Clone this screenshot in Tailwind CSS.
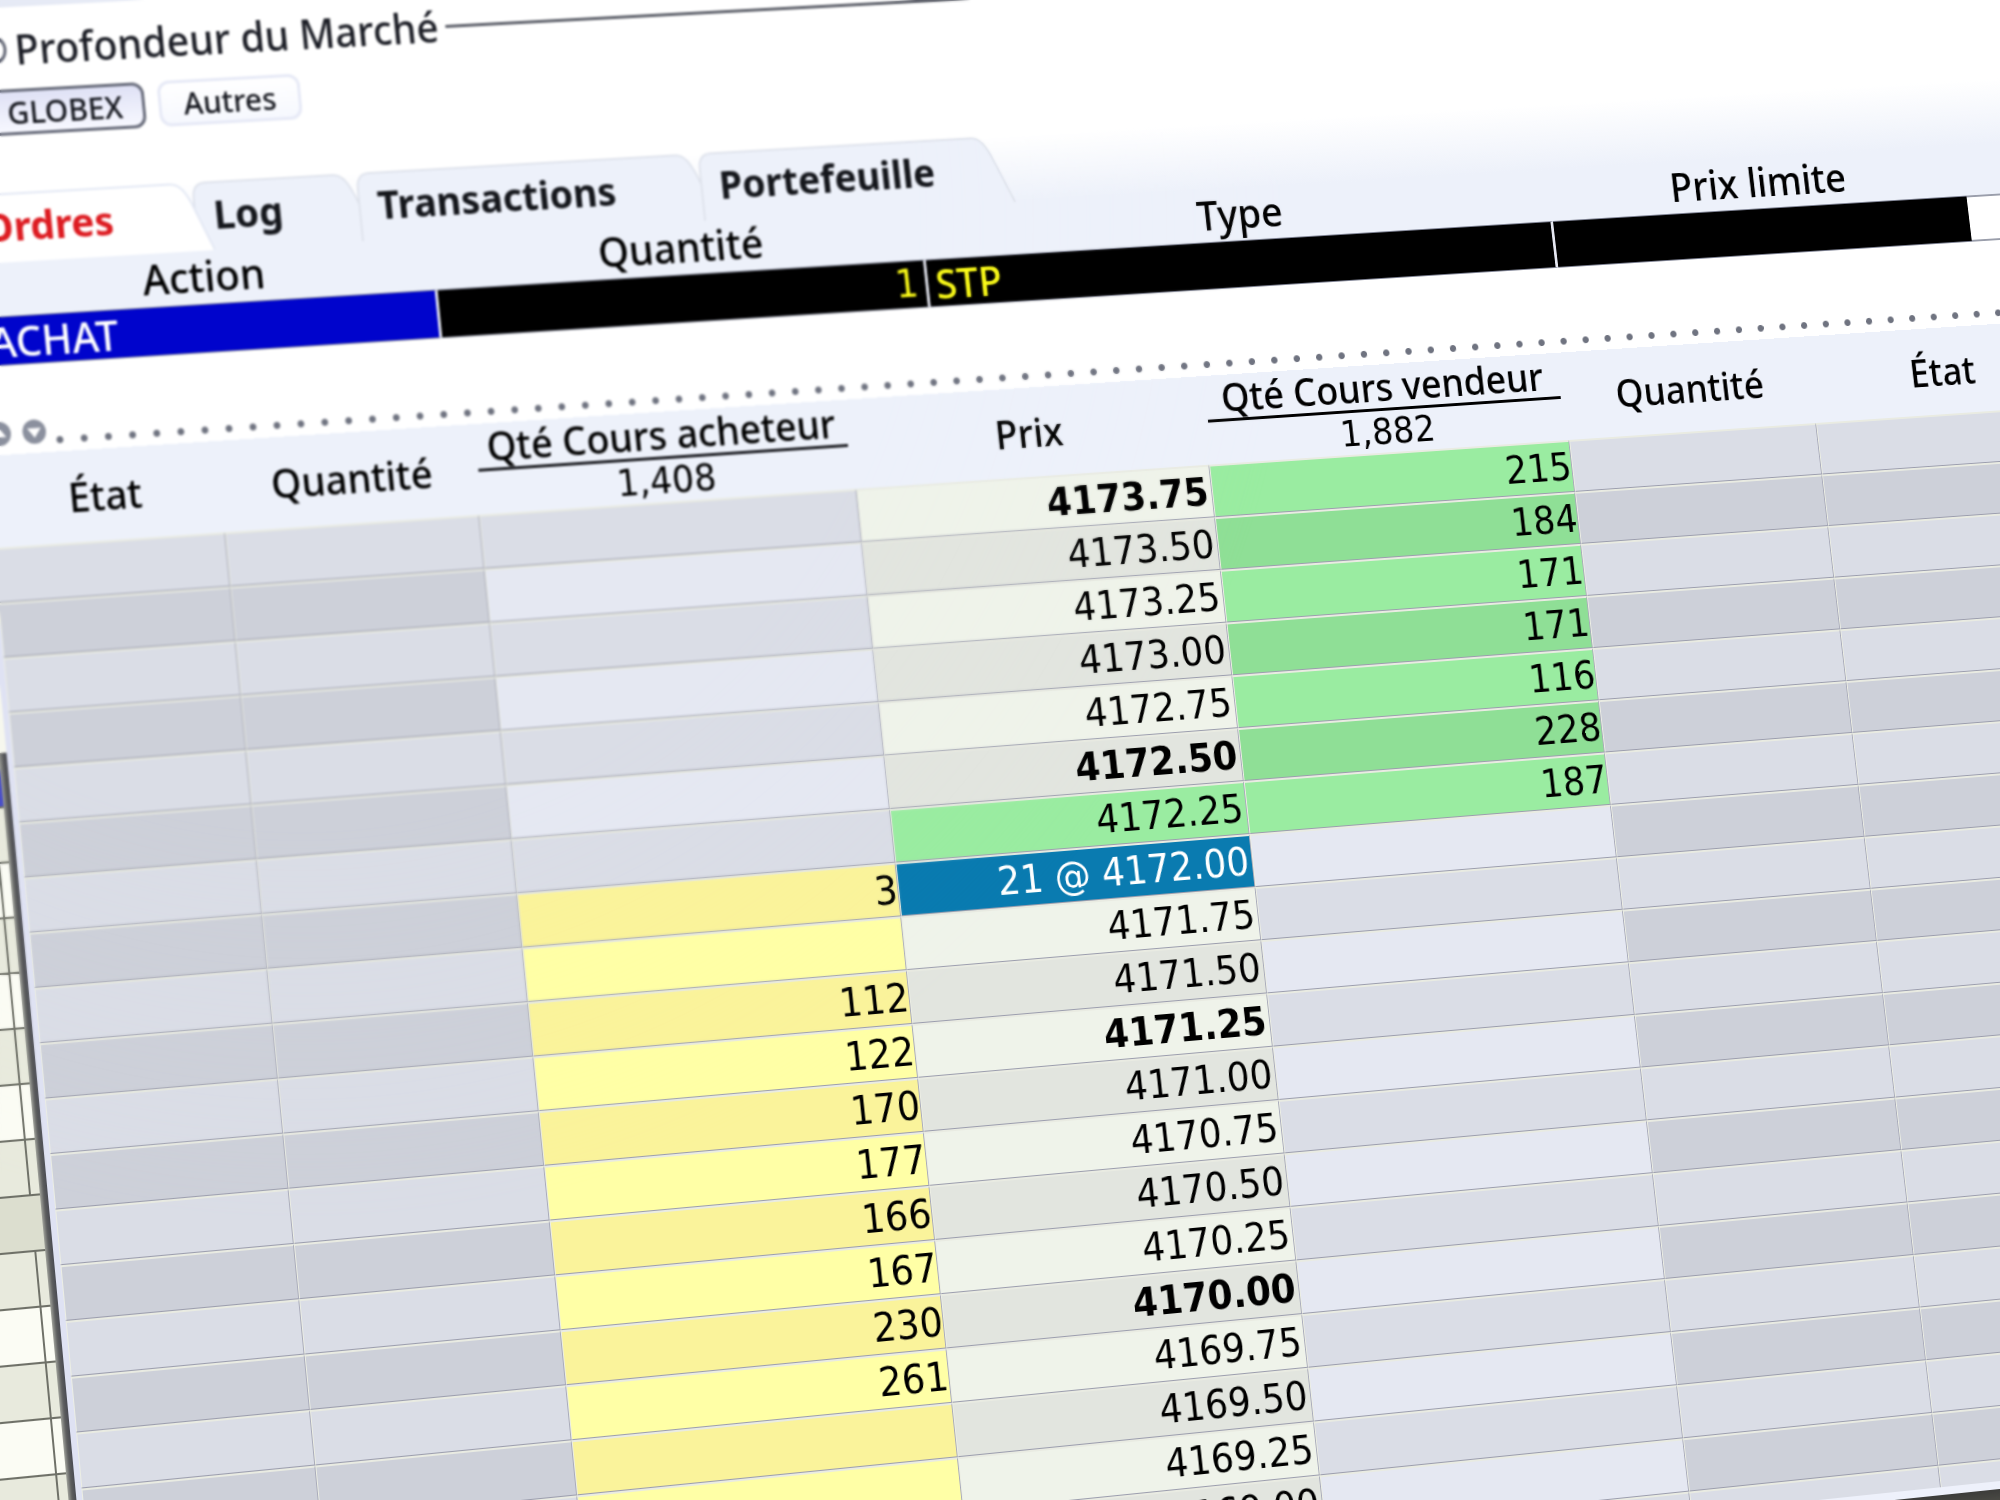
<!DOCTYPE html>
<html lang="fr">
<head>
<meta charset="utf-8">
<title>Profondeur du Marché</title>
<script src="https://cdn.jsdelivr.net/npm/@tailwindcss/browser@4"></script>
</head>
<body class="relative h-screen overflow-hidden bg-white font-['Noto_Sans',sans-serif] text-[40px] font-medium text-black">

<!-- The trading desk lies on a plane seen in perspective -->
<main class="flex w-[119%] origin-top-left [transform:matrix3d(0.972131,-0.050085,0,0.000030492,0.094496,1.000264,0,-0.0000129244,0,0,1,0,-161.63,-49.44,0,1)]">

  <!-- Window behind, only its last columns show -->
  <aside class="flex w-[95px] shrink-0 bg-[#f6f7ee] pt-[801px]" aria-hidden="true">
    <div class="flex-1" id="behind"></div>
    <div class="w-2 bg-linear-to-r from-[#a0a29b] via-[#5c5d5e] to-[#4a4b52]"></div>
  </aside>

  <div class="flex min-w-0 flex-1 flex-col">
    <section class="flex flex-col border-b-8 border-l-6 border-b-[#eef1fb] border-l-[#dfe2f3] bg-white">
      <div class="h-[65px] bg-[#e6eaf5]"></div>

      <!-- Group title -->
      <div class="mt-[14px] flex h-14 items-center gap-2 pl-[30px] text-[#1c1e26]">
        <svg class="size-8 shrink-0" viewBox="0 0 32 32" fill="none" stroke="#5f6372" stroke-width="3"><circle cx="16" cy="16" r="14"/></svg>
        <h1 class="text-[41px] leading-14 whitespace-nowrap">Profondeur du Marché</h1>
        <div class="h-[3px] flex-1 bg-[#5b5e68]"></div>
      </div>

      <div class="mt-3 flex h-[46px] gap-[14px] pl-[33px] text-[31px] text-[#16181f]">
        <button class="w-[166px] rounded-xl border-3 border-[#666a79] bg-linear-to-b from-[#dfe1f5] to-[#f7f8ff] leading-9">GLOBEX</button>
        <button class="w-[149px] rounded-xl border-3 border-[#e6e9f6] bg-linear-to-b from-white to-[#f6f8fe] leading-9">Autres</button>
      </div>

      <!-- Tabs -->
      <nav class="mt-[57px] flex h-[69px] bg-linear-to-b from-white to-[#edf1fa] font-bold" role="tablist">
        <button role="tab" aria-selected="true" class="relative z-10 flex w-[239px] pt-[5px] pl-5 leading-14 text-[#dd1c22]">
          <svg class="absolute top-0 left-0" width="257" height="69" viewBox="0 0 257 69" fill="none"><path d="M0 1H216C227 1 232 10 237 20L257 69H0Z" fill="#fff"/><path d="M0 1H216C227 1 232 10 237 20L257 69" stroke="#e3e8f4" stroke-width="2"/></svg>
          <span class="relative">Ordres</span>
        </button>
        <button role="tab" class="relative flex w-[172px] pt-[5px] pl-5 leading-14 text-[#15171c]">
          <svg class="absolute top-0 left-0" width="190" height="69" viewBox="0 0 190 69" fill="#edf1fa" stroke="#dfe3ec" stroke-width="2"><path d="M1 69V16Q1 1 14 1H148C158 1 163 10 168 20L189 69"/></svg>
          <span class="relative">Log</span>
        </button>
        <button role="tab" class="relative flex w-[364px] pt-[5px] pl-5 leading-14 text-[#15171c]">
          <svg class="absolute top-0 left-0" width="382" height="69" viewBox="0 0 382 69" fill="#edf1fa" stroke="#dfe3ec" stroke-width="2"><path d="M1 69V16Q1 1 14 1H340C350 1 355 10 360 20L381 69"/></svg>
          <span class="relative">Transactions</span>
        </button>
        <button role="tab" class="relative flex w-[338px] pt-[5px] pl-5 leading-14 text-[#15171c]">
          <svg class="absolute top-0 left-0" width="339" height="69" viewBox="0 0 339 69" fill="#edf1fa" stroke="#dfe3ec" stroke-width="2"><path d="M1 69V16Q1 1 14 1H297C307 1 312 10 317 20L338 69"/></svg>
          <span class="relative">Portefeuille</span>
        </button>
      </nav>

      <!-- Order entry -->
      <form class="grid grid-cols-[485px_524px_698px_476px_1fr] bg-[#edf1fa] text-center text-[42px]">
        <div class="flex flex-col">
          <label for="action" class="h-[53px] leading-[50px]">Action</label>
          <input id="action" value="ACHAT" class="h-[49px] w-full border-y border-r-3 border-y-[#7f8394] border-r-[#e6e8f2] bg-[#0004cc] px-4 text-white">
        </div>
        <div class="flex flex-col">
          <label for="qty" class="h-[53px] leading-[50px]">Quantité</label>
          <input id="qty" value="1" class="h-[49px] w-full border-y border-r-3 border-y-[#7f8394] border-r-[#e6e8f2] bg-black px-2 text-right font-['DejaVu_Sans',sans-serif] text-[39px] text-[#ffff19]">
        </div>
        <div class="flex flex-col">
          <label for="type" class="h-[53px] leading-[50px]">Type</label>
          <select id="type" class="h-[49px] w-full appearance-none border-y border-r-3 border-y-[#7f8394] border-r-[#e6e8f2] bg-black px-2 leading-[46px] text-[#ffff19]"><option>STP</option></select>
        </div>
        <div class="flex flex-col">
          <label for="limit" class="h-[53px] leading-[50px]">Prix limite</label>
          <input id="limit" class="h-[49px] w-full border-y border-[#7f8394] bg-black px-2 text-[#ffff19]">
        </div>
        <div class="flex flex-col pt-[53px]">
          <input aria-label="Prix stop" class="h-[49px] w-full border-y-2 border-[#9a9eab] bg-white px-2">
        </div>
      </form>

      <!-- Split handle -->
      <div class="mt-[55px] flex h-[33px] pl-[5px]">
        <svg class="mr-3 size-6 shrink-0" viewBox="0 0 24 24"><circle cx="12" cy="12" r="12" fill="#8b909e"/><path d="M5 15.500h14L12 6Z" fill="#fff"/></svg>
        <svg class="mr-px size-6 shrink-0" viewBox="0 0 24 24"><circle cx="12" cy="12" r="12" fill="#8b909e"/><path d="M5 8.500h14L12 18Z" fill="#fff"/></svg>
        <div class="mb-[7px] h-[9px] flex-1 self-end bg-[radial-gradient(circle,#6f7380_3px,transparent_4px)] bg-size-[25px_9px]"></div>
      </div>

      <!-- Market depth -->
      <div class="max-h-[1193px] overflow-hidden">
        <table class="w-full table-fixed border-separate border-spacing-0">
          <colgroup>
            <col class="w-[239px]"><col class="w-[266px]"><col class="w-[403px]"><col class="w-[386px]"><col class="w-[403px]"><col class="w-[282px]"><col>
          </colgroup>
          <thead class="bg-[#edf1fa]">
            <tr class="h-[91px] leading-[45px]">
              <th scope="col" class="p-0 font-medium">État</th>
              <th scope="col" class="p-0 pl-2 font-medium">Quantité</th>
              <th scope="col" class="p-0 px-1 align-top font-medium"><div class="h-12 border-b-3 border-[#1a1b20] whitespace-nowrap">Qté Cours acheteur</div><div class="h-[43px] font-['DejaVu_Sans',sans-serif] text-[37px] leading-[43px]">1,408</div></th>
              <th scope="col" class="p-0 font-medium">Prix</th>
              <th scope="col" class="p-0 px-1 align-top font-medium"><div class="h-12 border-b-3 border-black whitespace-nowrap">Qté Cours vendeur</div><div class="h-[43px] font-['DejaVu_Sans',sans-serif] text-[37px] leading-[43px]">1,882</div></th>
              <th scope="col" class="p-0 pl-1 font-medium">Quantité</th>
              <th scope="col" class="p-0 pl-1 font-medium">État</th>
            </tr>
          </thead>
          <tbody id="depth" class="text-right font-['DejaVu_Sans',sans-serif] text-[39px] leading-[51px]"></tbody>
        </table>
      </div>
    </section>
    <div class="h-[60px] bg-linear-to-b from-[#3c3c3a] to-[#8a8872]"></div>
  </div>
</main>

<!-- Depth of field: the upper left corner is out of focus -->
<div class="pointer-events-none absolute inset-0 backdrop-blur-[1px] [mask-image:radial-gradient(ellipse_1000px_1000px_at_15%_15%,black_60%,transparent_100%)]" aria-hidden="true"></div>

<script>
  // [bid size, price, ask size]
  const levels = [
    ['', '4173.75', '215'], ['', '4173.50', '184'], ['', '4173.25', '171'], ['', '4173.00', '171'],
    ['', '4172.75', '116'], ['', '4172.50', '228'], ['', '4172.25', '187'], ['3', '21 @ 4172.00', ''],
    ['', '4171.75', ''], ['112', '4171.50', ''], ['122', '4171.25', ''], ['170', '4171.00', ''],
    ['177', '4170.75', ''], ['166', '4170.50', ''], ['167', '4170.25', ''], ['230', '4170.00', ''],
    ['261', '4169.75', ''], ['', '4169.50', ''], ['', '4169.25', ''], ['', '4169.00', ''], ['', '4168.75', '']
  ];
  const tone = {
    side: ['bg-[#dadde6]', 'bg-[#cdd0d9]'],
    book: ['bg-[#dadde6]', 'bg-[#e5e8f2]'],
    bid: ['bg-[#ffffa6]', 'bg-[#faf39b]'],
    ask: ['bg-[#9aeca1]', 'bg-[#8fdf96]'],
    price: ['bg-[#eff3ea]', 'bg-[#e2e5df]']
  };
  const cell = (text, style) =>
    `<td class="h-[54px] border-t-2 border-r border-b border-l border-t-[#e9ebe2] border-r-[#a9abba] border-b-[#9c9eae] border-l-[#eceee4] p-0 whitespace-nowrap ${style}">${text}</td>`;
  document.getElementById('depth').innerHTML = levels.map(([bid, price, ask], i) => {
    const p = i % 2;
    const priceStyle = i === 7 ? 'bg-[#0a7bb0] pr-[3px] text-white'
      : i === 6 ? 'pr-[3px] ' + tone.ask[0]
      : i % 5 === 0 ? 'pr-[3px] font-bold ' + tone.price[p] : 'pr-[3px] ' + tone.price[p];
    return '<tr>' + cell('', tone.side[p]) + cell('', tone.side[p])
      + cell(bid, i > 6 ? tone.bid[p] : tone.book[p])
      + cell(price, priceStyle)
      + cell(ask, i < 7 ? tone.ask[p] : tone.book[p])
      + cell('', tone.side[p]) + cell('', tone.side[p]) + '</tr>';
  }).join('');

  const strip = (style, split) =>
    `<div class="flex h-[54px] border-b-2 border-[#6f7168] ${style}"><div class="${split ? 'w-[78px] border-r-2 border-[#6f7168]' : 'w-[78px]'}"></div></div>`;
  document.getElementById('behind').innerHTML = Array.from({ length: 18 }, (_, i) =>
    i === 0 ? strip('bg-[#4a4fc8]', false)
    : i === 8 ? strip('bg-[#dcdecf]', false)
    : i % 2 ? strip('bg-[#e8eadd]', true) : strip('bg-[#fbfcf4]', true)).join('');
</script>
</body>
</html>
